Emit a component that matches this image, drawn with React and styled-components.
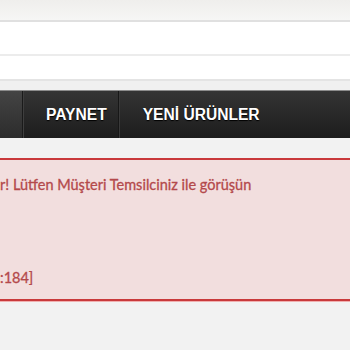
import React, { useLayoutEffect, useRef, useState } from 'react'
import styled, { createGlobalStyle } from 'styled-components'

const GlobalStyle = createGlobalStyle`
  html, body {
    margin: 0;
    padding: 0;
    background: #f2f2f2;
    overflow: hidden;
  }
`

const Page = styled.div`
  width: 350px;
  height: 350px;
  overflow: hidden;
  background: #f2f2f2;
`

const TopStrip = styled.div`
  height: 20px;
  background: linear-gradient(#efeeec, #f6f6f5);
`

const SearchArea = styled.div`
  background: #fff;
  border-top: 2px solid #e0e0e0;
  display: flex;
  flex-direction: column;
`

const SearchRow = styled.div`
  height: ${(p) => p.h}px;
  border-bottom: ${(p) => (p.line ? '2px solid #ececec' : 'none')};
`

const Shelf = styled.div`
  height: 9px;
  background: #f0f0f0;
  border-top: 2px solid #e4e4e4;
`

const Nav = styled.nav`
  display: flex;
  height: 47px;
  border-top: 1px solid #8c8c8c;
  background: linear-gradient(#343434, #1d1d1d);
`

const NavStub = styled.div`
  width: 22px;
  background: linear-gradient(#444, #2c2c2c);
  border-right: 1px solid #1a1a1a;
  box-shadow: 1px 0 0 #3e3e3e;
`

const NavItem = styled.a`
  display: flex;
  align-items: center;
  padding: 0 ${(p) => p.pr}px 0 ${(p) => p.pl}px;
  color: #fff;
  font-family: "Liberation Sans", Arial, sans-serif;
  font-weight: bold;
  font-size: 15.6px;
  text-shadow: 0 1px 1px #000;
  text-decoration: none;
  border-right: ${(p) => (p.sep ? '1px solid #171717' : 'none')};
  box-shadow: ${(p) => (p.sep ? '1px 0 0 #3a3a3a' : 'none')};
`

const Alert = styled.div`
  margin-top: 20px;
  height: 139px;
  background: #f2dede;
  border-top: 2px solid #c9393b;
  border-bottom: 2px solid #c9393b;
  box-shadow: 0 1px 0 #f0b0b0;
  overflow: hidden;
  color: #b4494b;
  font-family: Lato, "Open Sans", sans-serif;
  font-size: 14.5px;
  font-weight: 400;
  -webkit-text-stroke: 0.3px #b4494b;
`

const AlertLine = styled.div`
  white-space: nowrap;
  line-height: 20px;
  margin-top: ${(p) => p.top}px;
`

const Hidden = styled.span``

function ClippedLine({ top, hidden, shown }) {
  const ref = useRef(null)
  const [shift, setShift] = useState(0)

  useLayoutEffect(() => {
    if (ref.current) setShift(ref.current.getBoundingClientRect().width)
  }, [hidden])

  return (
    <AlertLine top={top} style={{ marginLeft: -shift }}>
      <Hidden ref={ref}>{hidden}</Hidden>
      {shown}
    </AlertLine>
  )
}

export default function App() {
  return (
    <Page>
      <GlobalStyle />
      <TopStrip />
      <SearchArea>
        <SearchRow h={32} line />
        <SearchRow h={23} />
      </SearchArea>
      <Shelf />
      <Nav>
        <NavStub />
        <NavItem href="#" pl={23} pr={11} sep>PAYNET</NavItem>
        <NavItem href="#" pl={24} pr={20}>YENİ ÜRÜNLER</NavItem>
      </Nav>
      <Alert>
        <ClippedLine
          top={15}
          hidden="Bu işlemi yapmaya yetkiniz bulunmamaktadı"
          shown="r! Lütfen Müşteri Temsilciniz ile görüşün"
        />
        <ClippedLine top={73} hidden="[CustomerController.php" shown=":184]" />
      </Alert>
    </Page>
  )
}
